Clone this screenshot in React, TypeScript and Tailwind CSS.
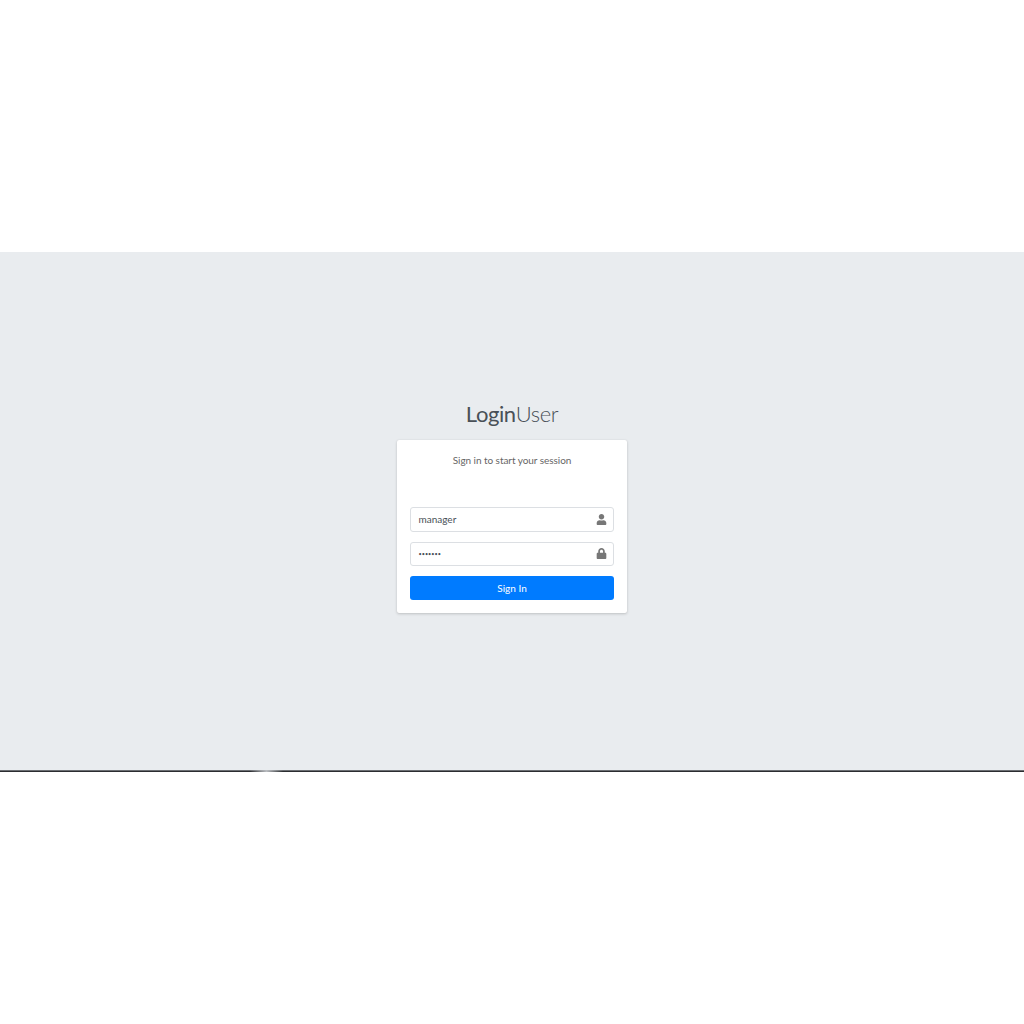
import { FaLock, FaUser } from "react-icons/fa";

function Field({ value, dots, icon }: { value: string; dots?: boolean; icon: React.ReactNode }) {
  return (
    <div className="flex h-[24.5px] items-center justify-between rounded-[3px] border border-[#dcdfe3] bg-white pl-[7.5px] pr-[6px]">
      <span className={dots ? "text-[5.5px] text-[#495057]" : "text-[10px] text-[#495057]"}>{value}</span>
      <span className="text-[11px] text-[#777]">{icon}</span>
    </div>
  );
}

export default function App() {
  return (
    <div className="min-h-[1024px] bg-white font-['Lato',sans-serif]">
      <div className="h-[252px]" />
      <main className="relative flex h-[518px] flex-col items-center justify-center bg-[#e9ecef] pb-[9px]">
        <div className="mb-[12px] text-[22px] leading-[28px] tracking-[-0.4px] text-[#495057]">
          <span className="font-normal">Login</span>
          <span className="font-light">User</span>
        </div>
        <div className="w-[230px] rounded-[2px] bg-white p-[13px] shadow-[0_0_1px_rgba(0,0,0,0.1),0_1px_3px_rgba(0,0,0,0.18)]">
          <p className="mb-[38px] -mt-[1px] text-center text-[10px] leading-[17px] tracking-[-0.05px] text-[#666]">Sign in to start your session</p>
          <form className="flex flex-col gap-[10px]">
            <Field value="manager" icon={<FaUser />} />
            <Field value="•••••••" dots icon={<FaLock />} />
            <button type="button" className="h-[24px] rounded-[3px] bg-[#007bff] text-[10px] text-white">
              Sign In
            </button>
          </form>
        </div>
        <div className="absolute left-[250px] top-full z-10 h-[2px] w-[33px] bg-gradient-to-r from-transparent via-[#b9bcc0] to-transparent" />
      </main>
      <div className="h-px bg-[#6b6e72]" />
      <div className="h-px bg-[#2b2d30]" />
    </div>
  );
}
